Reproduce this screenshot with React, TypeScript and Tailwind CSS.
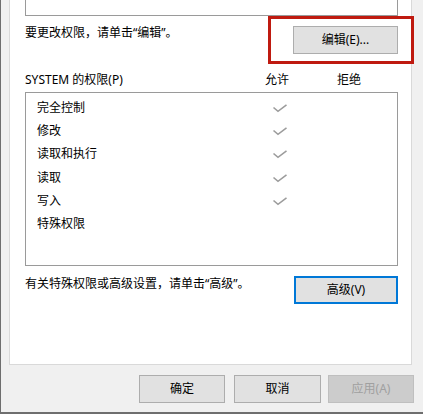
const font = "font-['Noto_Sans','Noto_Sans_CJK_SC',sans-serif]"

const perms = [
  { name: "完全控制", allow: true },
  { name: "修改", allow: true },
  { name: "读取和执行", allow: true },
  { name: "读取", allow: true },
  { name: "写入", allow: true },
  { name: "特殊权限", allow: false },
]

function Check() {
  return (
    <svg width="16" height="9" viewBox="0 0 16 9" className="mt-[1px]">
      <polyline points="1.5,3.5 6,7.3 14.5,0.8" fill="none" stroke="#9c9c9c" strokeWidth="1.6" />
    </svg>
  )
}

function Btn({ children, className = "" }: { children: React.ReactNode, className?: string }) {
  return (
    <button className={`h-[28px] flex items-center justify-center text-[12px] text-black bg-[#e1e1e1] border border-[#adadad] ${className}`}>
      {children}
    </button>
  )
}

export default function App() {
  return (
    <div className={`relative w-[423px] h-[414px] bg-[#f0f0f0] border-l border-b-2 border-[#6e6e6e] flex flex-col text-[12px] leading-[16px] text-black ${font}`}>
      {/* tab page */}
      <div className="ml-[8px] w-[403px] h-[365px] bg-white border-x border-b border-[#d9d9d9] pl-[15px] pr-[13px] flex flex-col">
        <div className="h-[16px] border-x border-b border-[#9a9a9a]" />

        <div className="mt-[10px] flex justify-between items-start">
          <span className="mt-[-1px]">要更改权限，请单击“编辑”。</span>
          <Btn className="w-[105px]">编辑(E)...</Btn>
        </div>

        <div className="mt-[18px] flex">
          <span className="w-[240px]">SYSTEM 的权限(P)</span>
          <span className="w-[72px]">允许</span>
          <span>拒绝</span>
        </div>

        <div className="mt-[4px] h-[174px] border border-[#9a9a9a] pt-[3px] pl-[11px]">
          {perms.map((p) => (
            <div key={p.name} className="h-[23.3px] flex items-center">
              <span className="w-[235px]">{p.name}</span>
              {p.allow && <Check />}
            </div>
          ))}
        </div>

        <div className="mt-[10px] flex justify-between items-start">
          <span>有关特殊权限或高级设置，请单击“高级”。</span>
          <button className="w-[104px] h-[28px] flex items-center justify-center text-[12px] bg-[#e1e1e1] border-2 border-[#0078d7]">
            高级(V)
          </button>
        </div>
      </div>

      {/* dialog buttons */}
      <div className="mt-[10px] flex pl-[138px]">
        <Btn className="w-[86px]">确定</Btn>
        <Btn className="w-[87px] ml-[9px]">取消</Btn>
        <button className="w-[86px] h-[28px] ml-[7px] flex items-center justify-center text-[12px] text-[#a0a0a0] bg-[#cccccc] border border-[#bfbfbf]">
          应用(A)
        </button>
      </div>

      {/* red highlight annotation */}
      <div className="absolute left-[267px] top-[16px] w-[146px] h-[48px] border-[3px] border-[#bf1a10]" />
    </div>
  )
}
